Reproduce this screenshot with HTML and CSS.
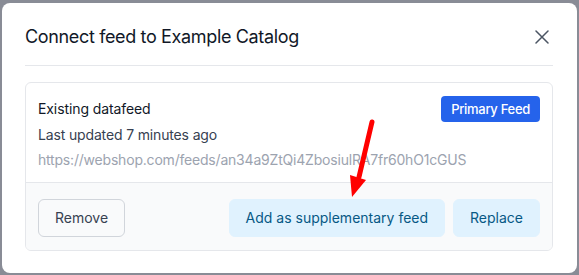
FILE: index.html
```html
<!DOCTYPE html>
<html lang="en">
<head>
<meta charset="utf-8">
<title>Connect feed</title>
<link rel="stylesheet" href="styles.css">
</head>
<body>
<div class="modal">
  <div class="modal-header">
    <h2 class="modal-title">Connect feed to Example Catalog</h2>
    <button class="close-btn" aria-label="Close">
      <svg width="14" height="14" viewBox="0 0 14 14"><path d="M1 1L13 13M13 1L1 13" stroke="currentColor" stroke-width="1.5" stroke-linecap="round"/></svg>
    </button>
  </div>
  <div class="card">
    <div class="card-body">
      <div class="row">
        <span class="feed-name">Existing datafeed</span>
        <span class="badge">Primary Feed</span>
      </div>
      <div class="updated">Last updated 7 minutes ago</div>
      <div class="url">https://webshop.com/feeds/an34a9ZtQi4ZbosiulRA7fr60hO1cGUS</div>
    </div>
    <div class="card-footer">
      <button class="btn btn-outline">Remove</button>
      <div class="actions">
        <button class="btn btn-soft">Add as supplementary feed</button>
        <button class="btn btn-soft">Replace</button>
      </div>
    </div>
  </div>
  <svg class="annot-arrow" width="40" height="90" viewBox="0 0 40 90">
    <path d="M33 3 L20 58" stroke="#ff0000" stroke-width="5" stroke-linecap="round" fill="none"/>
    <path d="M11 56 L27 61 L13 78 Z" fill="#ff0000"/>
  </svg>
</div>
</body>
</html>
```
FILE: styles.css
```css
* { box-sizing: border-box; }
html, body { margin: 0; padding: 0; }
body {
  background: #898c96;
  font-family: Inter, "Noto Sans", sans-serif;
  width: 579px;
  height: 275px;
  overflow: hidden;
  padding: 3px 2px 0 2px;
}
.modal {
  position: relative;
  width: 575px;
  height: 270px;
  background: #ffffff;
  border-radius: 8px;
  padding: 0 24px 0 23px;
}
.modal-header {
  display: flex;
  align-items: center;
  justify-content: space-between;
  padding: 20px 4px 14px 0;
  border-bottom: 1px solid #e5e7eb;
}
.modal-title {
  margin: 0;
  font-size: 18px;
  line-height: 28px;
  font-weight: 400;
  letter-spacing: -0.35px;
  color: #111827;
}
.close-btn {
  border: 0;
  background: none;
  padding: 0;
  width: 14px;
  height: 14px;
  color: #4b5563;
  display: flex;
}
.card {
  margin-top: 16px;
  border: 1px solid #e5e7eb;
  border-radius: 6px;
  overflow: hidden;
}
.card-body {
  padding: 13px 12px 11px 12px;
}
.row {
  display: flex;
  align-items: center;
  justify-content: space-between;
}
.feed-name {
  font-size: 14px;
  line-height: 20px;
  color: #111827;
  letter-spacing: -0.1px;
}
.badge {
  background: #2563eb;
  color: #ffffff;
  font-size: 13px;
  font-weight: 500;
  line-height: 20px;
  letter-spacing: -0.3px;
  padding: 3px 10px;
  border-radius: 4px;
}
.updated {
  margin-top: 2px;
  font-size: 14px;
  line-height: 22px;
  color: #374151;
  letter-spacing: -0.15px;
}
.url {
  margin-top: 3px;
  font-size: 14px;
  line-height: 22px;
  color: #9ca3af;
  letter-spacing: -0.2px;
}
.card-footer {
  display: flex;
  justify-content: space-between;
  align-items: center;
  background: #f9fafb;
  border-top: 1px solid #e5e7eb;
  padding: 16px 12px 13px 12px;
}
.actions {
  display: flex;
  gap: 8px;
}
.btn {
  font-family: inherit;
  font-size: 14px;
  line-height: 20px;
  height: 38px;
  padding: 0 16px;
  border-radius: 6px;
  cursor: pointer;
}
.btn-outline {
  background: #f9fafb;
  border: 1px solid #d1d5db;
  color: #374151;
}
.btn-soft {
  background: #e0f2fe;
  border: 1px solid #e0f2fe;
  color: #075985;
}
.annot-arrow {
  position: absolute;
  left: 337px;
  top: 116px;
}
```
